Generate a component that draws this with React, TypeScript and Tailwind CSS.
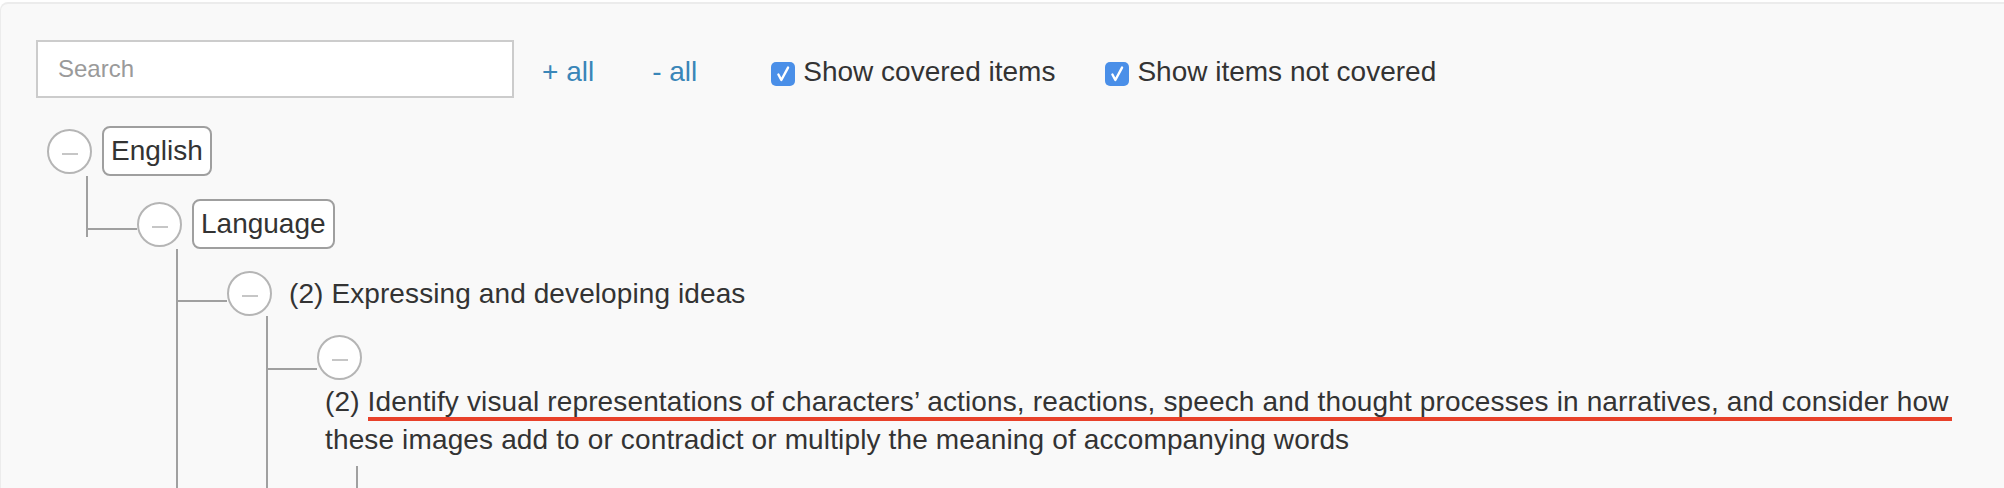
import React from "react";

function Circle() {
  return (
    <div className="w-[45px] h-[45px] shrink-0 rounded-full border-2 border-[#b5b5b5] bg-white flex items-center justify-center">
      <div className="w-[16px] h-[2px] bg-[#c6c6c6] mt-[5px]" />
    </div>
  );
}

function Box({ children }: { children: React.ReactNode }) {
  return (
    <div className="h-[50px] border-2 border-[#9f9f9f] rounded-[8px] bg-white px-[7px] flex items-center text-[28px] leading-none text-[#333]">
      {children}
    </div>
  );
}

function Check({ className }: { className: string }) {
  return (
    <div className={"w-[24px] h-[24px] shrink-0 rounded-[5px] bg-[#4a8fe8] flex items-center justify-center " + className}>
      <svg viewBox="0 0 24 24" className="w-[22px] h-[22px]">
        <path d="M7 12.5l3.2 6L17.5 5" stroke="white" strokeWidth="2.6" fill="none" strokeLinecap="round" strokeLinejoin="round" />
      </svg>
    </div>
  );
}

export default function App() {
  return (
    <div className="h-[488px] overflow-hidden bg-white pt-[2px] font-['Liberation_Sans',Arial,sans-serif] text-[#333]">
      <div className="min-h-full rounded-tl-[8px] border-t-2 border-l border-[#ececec] bg-[#f9f9f9] pt-[36px] pl-[35px] pr-[36px]">
        {/* toolbar */}
        <div className="flex items-start">
          <input
            placeholder="Search"
            className="w-[478px] h-[58px] border-2 border-[#cccccc] bg-white px-[20px] text-[24px] text-[#333] placeholder:text-[#9a9a9a] outline-none"
          />
          <div className="mt-[12px] flex items-center h-[40px] text-[28px] leading-[40px] whitespace-nowrap">
            <a className="ml-[28px] text-[#3a86b8] cursor-pointer">+ all</a>
            <a className="ml-[58px] text-[#3a86b8] cursor-pointer">- all</a>
            <Check className="ml-[74px] mt-[4px]" />
            <span className="ml-[8px]">Show covered items</span>
            <Check className="ml-[50px] mt-[4px]" />
            <span className="ml-[8px]">Show items not covered</span>
          </div>
        </div>

        {/* tree */}
        <div className="mt-[28px] pl-[11px]">
          {/* English */}
          <div className="flex items-center h-[50px] gap-[10px]">
            <Circle />
            <Box>English</Box>
          </div>
          <div className="ml-[39px]">
            {/* Language (last child) */}
            <div className="flex">
              <div className="w-[51px] shrink-0 h-[61px] border-l-2 border-[#a0a0a0]">
                <div className="h-[54px] border-b-2 border-[#a0a0a0]" />
              </div>
              <div className="mt-[23px] flex-1">
                <div className="flex items-center h-[50px] gap-[10px]">
                  <Circle />
                  <Box>Language</Box>
                </div>
                <div className="ml-[39px]">
                  {/* Expressing */}
                  <div className="flex border-l-2 border-[#a0a0a0]">
                    <div className="w-[49px] shrink-0 h-[53px] border-b-2 border-[#a0a0a0]" />
                    <div className="mt-[22px] flex-1">
                      <div className="flex items-center h-[45px]">
                        <Circle />
                        <span className="ml-[17px] text-[28px] leading-[40px] whitespace-nowrap tracking-[0.1px]">
                          (2) Expressing and developing ideas
                        </span>
                      </div>
                      <div className="ml-[39px]">
                        {/* Identify */}
                        <div className="flex border-l-2 border-[#a0a0a0]">
                          <div className="w-[49px] shrink-0 h-[54px] border-b-2 border-[#a0a0a0]" />
                          <div className="mt-[19px] flex-1">
                            <Circle />
                            <div className="ml-[8px] mt-[3px] text-[28px] leading-[38px] tracking-[0.14px]">
                              <div className="whitespace-nowrap">
                                (2){" "}
                                <span className="border-b-4 border-[#e8412a] pr-[3px]">
                                  Identify visual representations of characters’ actions, reactions, speech and thought processes in narratives, and consider how
                                </span>
                              </div>
                              <div className="whitespace-nowrap">
                                these images add to or contradict or multiply the meaning of accompanying words
                              </div>
                            </div>
                            <div className="ml-[39px] mt-[7px] h-[60px] border-l-2 border-[#a0a0a0]" />
                          </div>
                        </div>
                      </div>
                    </div>
                  </div>
                </div>
              </div>
            </div>
          </div>
        </div>
      </div>
    </div>
  );
}
